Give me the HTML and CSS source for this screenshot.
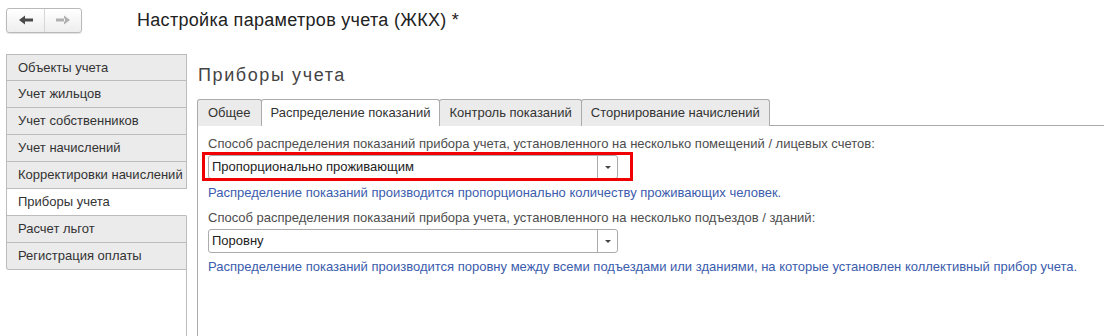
FILE: index.html
```html
<html>
<head>
	<title>Настройка параметров учета (ЖКХ)</title>
	<meta charset="UTF-8">
	<link rel="stylesheet" href="styles.css">
</head>
<body>
	<div class="top">
		<div class="nav">
			<span class="nav-btn">
				<svg width="14" height="10" viewBox="0 0 14 10"><path d="M0 5 L6 0.5 L6 9.5 Z M5 3.5 H14 V6.5 H5 Z" fill="#4a4a4a"/></svg>
			</span>
			<span class="nav-btn">
				<svg width="14" height="10" viewBox="0 0 14 10"><path d="M14 5 L8 0.5 L8 9.5 Z M0 3.5 H9 V6.5 H0 Z" fill="#b0b0b0"/></svg>
			</span>
		</div>
		<div class="title">Настройка параметров учета (ЖКХ) *</div>
	</div>

	<div class="main">
		<div class="side">
			<div class="side-item">Объекты учета</div>
			<div class="side-item">Учет жильцов</div>
			<div class="side-item">Учет собственников</div>
			<div class="side-item">Учет начислений</div>
			<div class="side-item">Корректировки начислений</div>
			<div class="side-item active">Приборы учета</div>
			<div class="side-item">Расчет льгот</div>
			<div class="side-item last">Регистрация оплаты</div>
			<div class="side-rest"></div>
		</div>

		<div class="content">
			<div class="heading">Приборы учета</div>
			<div class="tabs">
				<div class="tab">Общее</div>
				<div class="tab active">Распределение показаний</div>
				<div class="tab">Контроль показаний</div>
				<div class="tab">Сторнирование начислений</div>
			</div>
			<div class="panel">
				<div class="label">Способ распределения показаний прибора учета, установленного на несколько помещений / лицевых счетов:</div>
				<div class="select marked">
					<span class="select-text">Пропорционально проживающим</span>
					<span class="select-btn"></span>
				</div>
				<div class="hint">Распределение показаний производится пропорционально количеству проживающих человек.</div>

				<div class="label">Способ распределения показаний прибора учета, установленного на несколько подъездов / зданий:</div>
				<div class="select">
					<span class="select-text">Поровну</span>
					<span class="select-btn"></span>
				</div>
				<div class="hint">Распределение показаний производится поровну между всеми подъездами или зданиями, на которые установлен коллективный прибор учета.</div>
			</div>
		</div>
	</div>
</body>
</html>
```

FILE: styles.css
```css
*{
	margin: 0;
	padding: 0;
	box-sizing: border-box;
}
body{
	width: 1104px;
	height: 336px;
	overflow: hidden;
	font-family: "Liberation Sans", Arial, sans-serif;
	font-size: 13px;
	color: #333;
	background: #fff;
}
.top{
	display: flex;
	align-items: center;
	height: 54px;
	padding: 0 0 14px 6px;
}
.nav{
	display: flex;
	height: 25px;
	border: 1px solid #b9b9b9;
	border-radius: 3px;
	background: linear-gradient(#ffffff, #eeeeee);
	box-shadow: 0 1px 1px rgba(0,0,0,0.12);
}
.nav-btn{
	width: 37px;
	display: flex;
	align-items: center;
	justify-content: center;
}
.nav-btn + .nav-btn{
	border-left: 1px solid #d6d6d6;
}
.title{
	margin-left: 55px;
	font-size: 18px;
	letter-spacing: 0.3px;
	color: #222;
}
.main{
	display: flex;
	height: 282px;
	padding-left: 6px;
}
.side{
	width: 181px;
	display: flex;
	flex-direction: column;
}
.side-item{
	height: 27px;
	line-height: 26px;
	padding-left: 11px;
	background: #ebebeb;
	border: 1px solid #bcbcbc;
	border-top: none;
	color: #333;
}
.side-item:first-child{
	height: 27px;
	border-top: 1px solid #bcbcbc;
	line-height: 25px;
}
.side-item.active{
	background: #fff;
	border-right-color: #fff;
}
.side-item.last{
	border-bottom-left-radius: 3px;
}
.side-rest{
	flex: 1;
	border-right: 1px solid #bcbcbc;
}
.content{
	flex: 1;
	display: flex;
	flex-direction: column;
	margin-left: 10px;
}
.heading{
	padding-top: 10px;
	height: 45px;
	line-height: 22px;
	font-size: 18px;
	letter-spacing: 1.6px;
	color: #444;
	padding-left: 1px;
}
.tabs{
	display: flex;
	border-bottom: 1px solid #ababab;
	height: 27px;
}
.tab{
	height: 27px;
	line-height: 25px;
	padding: 0 9px;
	background: #ebebeb;
	border: 1px solid #ababab;
	border-bottom: none;
	border-radius: 3px 3px 0 0;
	color: #333;
}
.tab:first-child{
	padding: 0 10px;
}
.tab + .tab{
	margin-left: -1px;
}
.tab.active{
	background: #fff;
	height: 27px;
	position: relative;
	z-index: 1;
}
.panel{
	flex: 1;
	border-left: 1px solid #ababab;
	padding: 10px 0 0 10px;
}
.label{
	line-height: 16px;
	color: #4d4d4d;
	margin-bottom: 3px;
}
.select{
	position: relative;
	display: flex;
	width: 410px;
	height: 24px;
	border: 1px solid #ababab;
	border-radius: 3px;
	margin-bottom: 6px;
}
.select-text{
	flex: 1;
	line-height: 22px;
	padding-left: 3px;
	color: #222;
}
.select-btn{
	width: 20px;
	border-left: 1px solid #ababab;
	position: relative;
}
.select-btn:after{
	content: "";
	position: absolute;
	left: 7px;
	top: 10px;
	border-left: 3px solid transparent;
	border-right: 3px solid transparent;
	border-top: 3px solid #444;
}
.marked:after{
	content: "";
	position: absolute;
	left: -7px;
	top: -4px;
	right: -16px;
	bottom: -3px;
	border: 3px solid #f00000;
}
.hint{
	line-height: 16px;
	color: #3b5cad;
	margin-bottom: 9px;
}
```
